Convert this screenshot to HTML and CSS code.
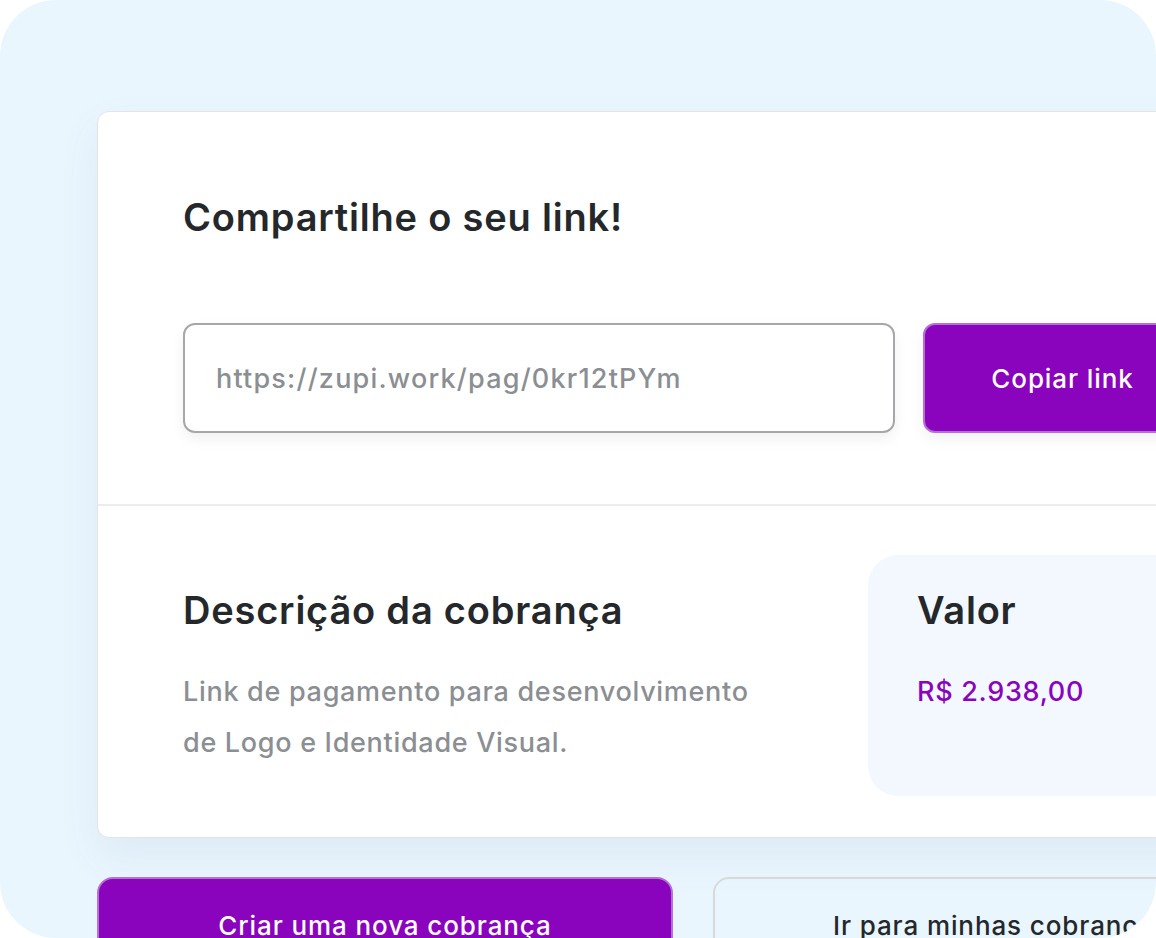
FILE: index.html
```html
<!DOCTYPE html>
<html lang="pt-BR">
<head>
    <meta charset="UTF-8">
    <meta name="viewport" content="width=device-width, initial-scale=1.0">
    <title>Compartilhe o seu link</title>
    <link rel="stylesheet" href="styles.css">
</head>
<body>

<div class="frame">
    <div class="frame-inner">
        <div class="card">
            <div class="share-section">
                <h1 class="section-title">Compartilhe o seu link!</h1>
                <div class="link-row">
                    <input class="link-input" type="text" placeholder="https://zupi.work/pag/0kr12tPYm" readonly>
                    <button class="copy-button">Copiar link</button>
                </div>
            </div>

            <div class="details-section">
                <div class="description">
                    <h2 class="section-title">Descrição da cobrança</h2>
                    <p class="description-text">Link de pagamento para desenvolvimento de Logo e Identidade Visual.</p>
                </div>
                <div class="value-box">
                    <h2 class="section-title">Valor</h2>
                    <p class="value-amount">R$ 2.938,00</p>
                </div>
            </div>
        </div>

        <div class="actions">
            <button class="action-button primary">Criar uma nova cobrança</button>
            <button class="action-button secondary">Ir para minhas cobranças</button>
        </div>
    </div>
</div>

</body>
</html>
```

FILE: styles.css
```css
body {
    margin: 0;
    background: #ffffff;
    font-family: Inter, "Noto Sans", Arial, sans-serif;
    color: #25282b;
}
.frame {
    width: 1156px;
    height: 938px;
    box-sizing: border-box;
    padding: 111px 0 0 97px;
    border-radius: 56px;
    overflow: hidden;
    background: #eaf6fe;
}
.frame-inner {
    width: 1192px;
    display: flex;
    flex-direction: column;
    gap: 39px;
}
.card {
    background: #ffffff;
    border: 1px solid #e2e4e6;
    border-radius: 12px;
    box-shadow: 0 18px 40px rgba(70, 100, 150, 0.08);
}
.section-title {
    margin: 0;
    font-size: 38px;
    line-height: 44px;
    font-weight: 600;
    letter-spacing: 0.8px;
    color: #25282b;
}
.share-section {
    padding: 83px 86px 71px 85px;
    border-bottom: 2px solid #ededed;
}
.link-row {
    display: flex;
    gap: 28px;
    margin-top: 84px;
}
.link-input {
    width: 712px;
    height: 110px;
    box-sizing: border-box;
    padding: 0 31px;
    border: 2px solid #a5a7a9;
    border-radius: 12px;
    box-shadow: 0 6px 14px rgba(0, 0, 0, 0.06);
    font-family: inherit;
    font-size: 27px;
    font-weight: 500;
    letter-spacing: 1.2px;
    outline: none;
}
.link-input::placeholder {
    color: #8b8e92;
}
.copy-button {
    flex: 1;
    height: 110px;
    border: 2px solid #b46fd8;
    border-radius: 12px;
    background: #8904bc;
    color: #ffffff;
    font-family: inherit;
    font-size: 26px;
    font-weight: 500;
    letter-spacing: 0.9px;
    box-shadow: 0 6px 14px rgba(0, 0, 0, 0.06);
}
.details-section {
    display: flex;
    justify-content: space-between;
    align-items: flex-start;
    padding: 49px 0 41px 85px;
}
.description {
    width: 590px;
    margin-top: 33px;
}
.description-text {
    margin: 34px 0 0;
    font-size: 27px;
    line-height: 51px;
    font-weight: 500;
    letter-spacing: 0.7px;
    color: #8b8e92;
}
.value-box {
    width: 420px;
    height: 241px;
    box-sizing: border-box;
    padding: 33px 0 0 49px;
    border-radius: 30px 0 0 30px;
    background: #f3f7fe;
}
.value-amount {
    margin: 34px 0 0;
    font-size: 27px;
    line-height: 51px;
    font-weight: 500;
    letter-spacing: 0.7px;
    color: #8904bc;
}
.actions {
    display: flex;
    gap: 40px;
}
.action-button {
    flex: 1;
    height: 96px;
    border-radius: 16px;
    font-family: inherit;
    font-size: 26px;
    font-weight: 500;
    letter-spacing: 0.9px;
}
.action-button.primary {
    background: #8904bc;
    border: 2px solid #b46fd8;
    color: #ffffff;
}
.action-button.secondary {
    background: transparent;
    border: 2px solid #d7d9db;
    color: #25282b;
}
```
